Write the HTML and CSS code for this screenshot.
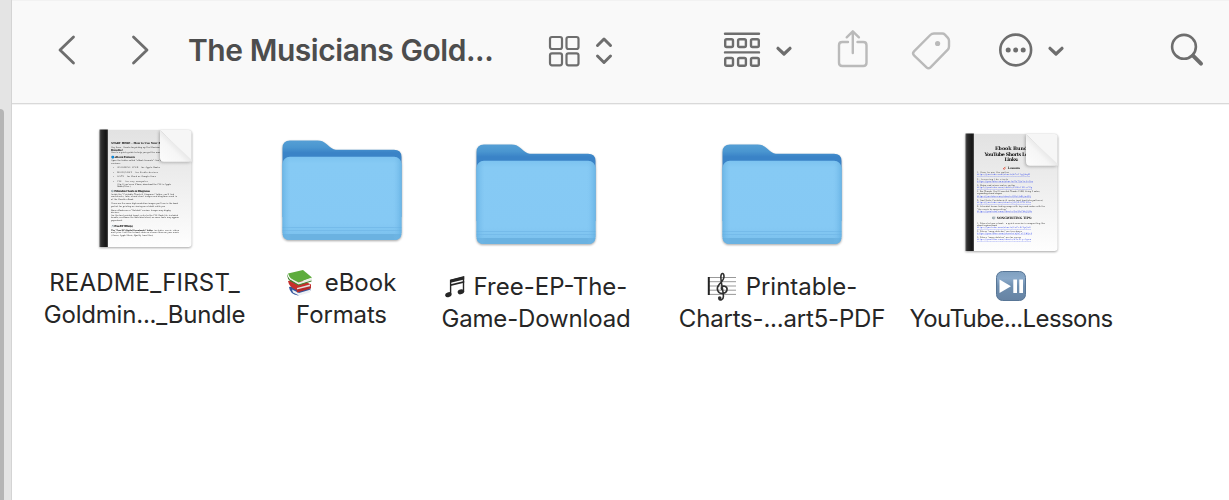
FILE: index.html
```html
<!DOCTYPE html>
<html lang="en">
<head>
    <meta charset="UTF-8">
    <meta name="viewport" content="width=device-width, initial-scale=1.0">
    <title>The Musicians Goldmine</title>
    <link rel="stylesheet" href="styles.css">
</head>
<body>
    <!-- shared gradients and the folder shape -->
    <svg class="defs" width="0" height="0">
        <defs>
            <linearGradient id="folderBack" x1="0" y1="0" x2="0" y2="1">
                <stop offset="0" stop-color="#559fd5"/>
                <stop offset="0.09" stop-color="#4a96d0"/>
                <stop offset="0.16" stop-color="#3a83c7"/>
                <stop offset="1" stop-color="#3a83c7"/>
            </linearGradient>
            <linearGradient id="folderFront" x1="0" y1="0" x2="0" y2="1">
                <stop offset="0" stop-color="#7cc3f0"/>
                <stop offset="0.08" stop-color="#86caf4"/>
                <stop offset="0.8" stop-color="#85c9f4"/>
                <stop offset="1" stop-color="#79bfec"/>
            </linearGradient>
            <linearGradient id="edge" x1="0" y1="0" x2="1" y2="0">
                <stop offset="0" stop-color="#5fade0" stop-opacity="0.7"/>
                <stop offset="0.07" stop-color="#7cc0ee" stop-opacity="0"/>
                <stop offset="0.93" stop-color="#7cc0ee" stop-opacity="0"/>
                <stop offset="1" stop-color="#5fade0" stop-opacity="0.7"/>
            </linearGradient>
            <linearGradient id="page" x1="0" y1="0" x2="0" y2="1">
                <stop offset="0" stop-color="#e2e2e2"/>
                <stop offset="0.45" stop-color="#eeeeee"/>
                <stop offset="1" stop-color="#fefefe"/>
            </linearGradient>
            <linearGradient id="binder" x1="0" y1="0" x2="1" y2="0">
                <stop offset="0" stop-color="#555"/>
                <stop offset="0.25" stop-color="#2c2c2c"/>
                <stop offset="0.8" stop-color="#141414"/>
                <stop offset="1" stop-color="#555"/>
            </linearGradient>
            <linearGradient id="curl" x1="0" y1="1" x2="0.55" y2="0.45">
                <stop offset="0" stop-color="#fcfcfc"/>
                <stop offset="0.7" stop-color="#f6f6f6"/>
                <stop offset="1" stop-color="#e6e6e6"/>
            </linearGradient>
            <linearGradient id="key" x1="0" y1="0" x2="0" y2="1">
                <stop offset="0" stop-color="#7fa0c0"/>
                <stop offset="0.25" stop-color="#8aa9c9"/>
                <stop offset="0.5" stop-color="#6f8fb0"/>
                <stop offset="1" stop-color="#6683a3"/>
            </linearGradient>
            <symbol id="folder" viewBox="0 0 130 128">
                <path d="M5.500 22q0-7.500 7.500-7.500h27.500c4 0 6 1 9 3.500l3.500 3c2.500 2 4.500 2.800 8.500 2.800h55.500q7.500 0 7.500 7.200v60h-119z" fill="url(#folderBack)"/>
                <rect x="5.500" y="30.800" width="119" height="83.200" rx="7.500" fill="url(#folderFront)"/>
                <path d="M5.700 101.500h118.600M5.700 104.500h118.600" stroke="#75bbea" stroke-width="1"/>
                <path d="M5.500 108h119q-.5 6-7.500 6h-104q-7 0-7.500-6z" fill="#6bb2e1"/>
                <rect x="5.500" y="30.800" width="119" height="83.200" rx="7.500" fill="url(#edge)"/>
            </symbol>
            <symbol id="sheet" viewBox="0 0 130 128">
                <path d="M20 4h88.500q3 0 3 3v111q0 3-3 3h-88.500z" fill="url(#page)"/>
                <rect x="19.500" y="3.500" width="8.500" height="117.500" fill="url(#binder)"/>
            </symbol>
            <symbol id="corner" viewBox="0 0 130 128">
                <path d="M80 4h28.500q3 0 3 3v29z" fill="#f6f6f6"/>
                <path d="M80 4.300v27.500q0 4 4 4h25q2.500 0 2.500-2z" fill="url(#curl)"/>
            </symbol>
        </defs>
    </svg>

    <div class="window">
        <div class="sidebar">
            <div class="scroll-thumb"></div>
        </div>

        <div class="main">
            <div class="toolbar">
                <svg class="icon back" width="20" height="40"><path d="M16.500 7L3 20l13.500 13"/></svg>
                <svg class="icon forward" width="20" height="40"><path d="M3.500 7L17 20 3.500 33"/></svg>
                <div class="title">The Musicians Gold...</div>
                <svg class="icon view" width="32" height="40">
                    <rect x="2" y="7" width="12" height="12" rx="2"/>
                    <rect x="18.500" y="7" width="12" height="12" rx="2"/>
                    <rect x="2" y="23.300" width="12" height="12" rx="2"/>
                    <rect x="18.500" y="23.300" width="12" height="12" rx="2"/>
                </svg>
                <svg class="icon updown" width="20" height="40"><path d="M3.500 15.500L10 9l6.500 6.500M3.500 26L10 32.500l6.500-6.500"/></svg>
                <svg class="icon group" width="38" height="40">
                    <path d="M2 3.700h34M2 22.400h34"/>
                    <rect x="2.200" y="9.200" width="7.800" height="7.800" rx="1.500"/>
                    <rect x="15.100" y="9.200" width="7.800" height="7.800" rx="1.500"/>
                    <rect x="28" y="9.200" width="7.800" height="7.800" rx="1.500"/>
                    <rect x="2.200" y="28" width="7.800" height="7.800" rx="1.500"/>
                    <rect x="15.100" y="28" width="7.800" height="7.800" rx="1.500"/>
                    <rect x="28" y="28" width="7.800" height="7.800" rx="1.500"/>
                </svg>
                <svg class="icon chevron" width="20" height="40"><path d="M4 18.300l6 5.700 6-5.700"/></svg>
                <svg class="icon share disabled" width="34" height="40">
                    <path d="M12 12H6.200Q3 12 3 15.200v17.600Q3 36 6.200 36h21.100q3.200 0 3.200-3.200V15.200q0-3.200-3.200-3.200H21.500M16.800 23V2M10.700 7.300l6.100-6 6.100 6"/>
                </svg>
                <svg class="icon tag disabled" width="40" height="40">
                    <path d="M22 3.500h8.300q1.500 0 2.600 1.100l3 3.300q1.100 1.200 1.100 2.800v5.800q0 1.800-1.200 3.100L18.500 37.300q-2 2-4 0L2 25.300q-1.900-1.900 0-3.900L18.300 5q1.500-1.500 3.700-1.500z"/>
                    <circle class="dot" cx="25.600" cy="13.500" r="2.600"/>
                </svg>
                <svg class="icon more" width="36" height="40">
                    <circle cx="17.700" cy="20" r="15.400"/>
                    <circle class="dot" cx="10.200" cy="20" r="2.500"/>
                    <circle class="dot" cx="17.700" cy="20" r="2.500"/>
                    <circle class="dot" cx="25.200" cy="20" r="2.500"/>
                </svg>
                <svg class="icon chevron more-chevron" width="20" height="40"><path d="M4 18.300l6 5.700 6-5.700"/></svg>
                <svg class="icon search" width="36" height="40">
                    <circle cx="15" cy="16.800" r="11.900"/>
                    <path class="handle" d="M24 25.700l8 8"/>
                </svg>
            </div>

            <div class="files">
                <div class="file">
                    <svg class="thumb" width="130" height="128">
                        <use href="#sheet"/>
                        <g class="doc-text">
                            <text class="b" x="31" y="17.700" textLength="58">START HERE – How to Use Your Bundle</text>
                            <text x="31" y="21.800" textLength="50">Hey there – thanks for picking up The Musicians</text>
                            <text class="b" x="31" y="24.600">Bundle!</text>
                            <text x="31" y="27.300" textLength="50">Here's a quick guide to help you get the most</text>
                            <text class="b" x="31" y="31.500" textLength="24">📘 eBook Formats</text>
                            <text x="31" y="34.700" textLength="55">Open the folder called "eBook Formats". You'll find</text>
                            <text x="31" y="37.500">versions:</text>
                            <text x="33" y="41.800">•</text><text x="37" y="41.800" textLength="43">GOLDMINE EPUB – for Apple Books</text>
                            <text x="33" y="46.500">•</text><text x="37" y="46.500" textLength="41">MOBI/AZW3 – for Kindle devices</text>
                            <text x="33" y="51.200">•</text><text x="37" y="51.200" textLength="39">DOCX – for Word or Google Docs</text>
                            <text x="33" y="56">•</text><text x="37" y="56" textLength="31">PDF – for any computer</text>
                            <text x="37" y="58.700" textLength="54">(Tip: If you're on iPhone, download the PDF in Apple</text>
                            <text x="37" y="61.200">Books/Files.)</text>
                            <text class="b" x="31" y="66" textLength="39">🎼 Printable Charts &amp; Diagrams</text>
                            <text x="31" y="68.700" textLength="63">Inside the "Printable Charts &amp; Diagrams" folder, you'll find</text>
                            <text x="31" y="71.400" textLength="66">worksheets, tabs, chord chart images and diagrams used in</text>
                            <text x="31" y="74" textLength="23">of the Bundle eBook.</text>
                            <text x="31" y="77.900" textLength="67">These are the same high-resolution images you'll see in the book</text>
                            <text x="31" y="80.600" textLength="54">perfect for printing or viewing on a tablet while you</text>
                            <text x="31" y="84.500" textLength="60">Some eBooks are a "Portable" version. Images may display</text>
                            <text x="31" y="87">devices.</text>
                            <text x="31" y="89.700" textLength="67">For the best printed layout, refer to the PDF Book file, included</text>
                            <text x="31" y="92.400" textLength="68">bundle, or choose the individual chart, as some fonts may appear</text>
                            <text x="31" y="95">paperback.</text>
                            <text class="b" x="31" y="101" textLength="22">🎵 Free EP Offer(s)</text>
                            <text class="m" x="31" y="104.500" textLength="42">The "Free EP (Digital Downloads)" folder</text>
                            <text x="74" y="104.500" textLength="25">includes music video</text>
                            <text x="31" y="107.200" textLength="68">and lyrics. Feel free to load, share or stream these on your music</text>
                            <text x="31" y="109.800" textLength="42">(iTunes, Apple Music, Spotify Local files)</text>
                        </g>
                        <use class="curl" href="#corner"/>
                    </svg>
                    <div class="label">
                        <div class="line readme">README_FIRST_</div>
                        <div class="line bundle">Goldmin..._Bundle</div>
                    </div>
                </div>

                <div class="file">
                    <svg class="thumb" width="130" height="128"><use href="#folder"/></svg>
                    <div class="label">
                        <div class="line">
                            <svg class="emoji books" width="26" height="28" viewBox="0 0 26 28">
                                <path d="M2 18l14-3 8 6-13 5.500q-8-1-9-8.500z" fill="#32569e"/>
                                <path d="M5 20.500l7 3.500 11-3.200v2.700L12 26.500l-6-3z" fill="#edf0f4"/>
                                <path d="M1 12l12-2 11 5.500v2L9 21Q2 18 1 12z" fill="#c62f2c"/>
                                <path d="M10 19l13-3.500v3.200L10 22z" fill="#e5e1df"/>
                                <path d="M9.500 20.500L24 17v2.500L10 23.500z" fill="#b5292a"/>
                                <path d="M1 4.500L16 1l9 7.500L11 13.500Q3 11 1 4.500z" fill="#5eac3d"/>
                                <path d="M3 9l8.500 4.500 13.500-4.500v2.500L12 16Q4 13 3 9z" fill="#e9eee5"/>
                                <path d="M1 4.500q-1 3 2 6l8.500 5 13-4v1L11.500 16.500 3 12Q-1 8 1 4.500z" fill="#3e7f2c"/>
                            </svg>
                            <span>eBook</span>
                        </div>
                        <div class="line formats">Formats</div>
                    </div>
                </div>

                <div class="file lower">
                    <svg class="thumb" width="130" height="128"><use href="#folder"/></svg>
                    <div class="label">
                        <div class="line free-ep">
                            <svg class="emoji notes" width="20" height="22" viewBox="0 0 20 22">
                                <path d="M5.600 18V4.400L18.500 1v15" fill="none" stroke="#262626" stroke-width="1.400"/>
                                <path d="M5.600 3.700L19.200.5v3L5.600 6.700zM5.600 8.200L19.200 5v1.800L5.600 10z" fill="#262626"/>
                                <ellipse cx="3.400" cy="18.700" rx="3.300" ry="2.400" transform="rotate(-18 3.400 18.700)" fill="#262626"/>
                                <ellipse cx="15.900" cy="15.800" rx="3.300" ry="2.400" transform="rotate(-18 15.900 15.800)" fill="#262626"/>
                            </svg>
                            <span>Free-EP-The-</span>
                        </div>
                        <div class="line game">Game-Download</div>
                    </div>
                </div>

                <div class="file lower">
                    <svg class="thumb" width="130" height="128"><use href="#folder"/></svg>
                    <div class="label">
                        <div class="line printable">
                            <svg class="emoji score" width="30" height="30" viewBox="0 0 30 30">
                                <path d="M1 5.500h28M1 9.700h28M1 14h28M1 18.200h28M1 22.400h28" stroke="#999" stroke-width="1"/>
                                <path d="M1.800 5v18" stroke="#222" stroke-width="2"/>
                                <path d="M14.800 17.500c-1.500-2 .8-4 3-3.200 3.500 1.200 3 6.700-2 7.200-5 .4-7-5-4-8.600 2.500-3 5.400-5 5.200-8.500C16.800.8 14.500.500 13.900 4c-.6 4 2.600 16 2.500 20.500 0 3.500-3.500 4.200-4.500 2.500" fill="none" stroke="#303030" stroke-width="1.600"/>
                                <circle cx="12.700" cy="26" r="1.800" fill="#303030"/>
                            </svg>
                            <span>Printable-</span>
                        </div>
                        <div class="line charts">Charts-...art5-PDF</div>
                    </div>
                </div>

                <div class="file lower">
                    <svg class="thumb" width="130" height="128">
                        <use href="#sheet"/>
                        <g class="doc-text">
                            <text class="h" x="49" y="19.700" textLength="37">Ebook Bundle</text>
                            <text class="h" x="38.500" y="25.500" textLength="54">YouTube Shorts Lesson</text>
                            <text class="h" x="58.500" y="30.700" textLength="14">Links:</text>
                            <text class="s" x="57" y="38.700" textLength="17"><tspan fill="#e05050">🎸</tspan> Lessons</text>
                            <text x="31" y="43" textLength="32">1. How to use the guitar</text>
                            <text class="a" x="31" y="45.300" textLength="53">https://youtube.com/shorts/b7uYTgJjkqM</text>
                            <text x="31" y="49.500" textLength="31">2. Learning the circle</text>
                            <text class="a" x="31" y="51.800" textLength="56">https://youtube.com/shorts/5s7QeYuExNw</text>
                            <text x="31" y="55.700" textLength="38">3. Major and minor scales, guitar</text>
                            <text class="a" x="31" y="58" textLength="55">https://youtube.com/shorts/l9WuTMLzZPg</text>
                            <text x="31" y="62" textLength="63">4. Bar Chords: The 5 Essential Chords TABS, Using 3 notes,</text>
                            <text x="31" y="64.400" textLength="25">expanding chord shapes</text>
                            <text class="a" x="31" y="66.800" textLength="54">https://youtube.com/shorts/ZSxEb8kjmWQ</text>
                            <text x="31" y="70.700" textLength="66">5. Tool Note: Pentatonic &amp; scales (and lead into patterns)</text>
                            <text class="a" x="31" y="73" textLength="54">https://youtube.com/shorts/jNQXAC9IVRw</text>
                            <text x="31" y="77" textLength="68">6. Extended lesson finding songs with keys and scales with the</text>
                            <text x="31" y="79.500" textLength="30">"the music to songwriting"</text>
                            <text class="a" x="31" y="81.800" textLength="55">https://youtube.com/shorts/4wMvPbkJQ8c</text>
                            <text class="s" x="46" y="88.700" textLength="40">🎼 SONGWRITING TIPS:</text>
                            <text x="31" y="93.500" textLength="68">1. Where to hear a hook – a quick exercise in songwriting like</text>
                            <text x="31" y="95.700" textLength="20">chord inspired hook</text>
                            <text class="a" x="31" y="98" textLength="54">https://youtube.com/shorts/EuPvKiXpQxU</text>
                            <text x="31" y="101.500" textLength="45">2. Where "song sketches" are for chorus</text>
                            <text class="a" x="31" y="103.800" textLength="55">https://youtube.com/shorts/uJb7xYFbQr0</text>
                            <text x="31" y="107.700" textLength="44">3. Where "song sketches" are for verses</text>
                            <text class="a" x="31" y="110" textLength="54">https://youtube.com/shorts/h2uXLyz1gno</text>
                        </g>
                        <use class="curl" href="#corner"/>
                    </svg>
                    <div class="label">
                        <div class="line">
                            <svg class="emoji play" width="30" height="30" viewBox="0 0 30 30">
                                <rect x=".5" y=".5" width="29" height="29" rx="6" fill="url(#key)" stroke="#587696"/>
                                <path d="M3.500 8.500L15 15.200 3.500 22z" fill="#fff"/>
                                <path d="M17.300 8.500h3.700v13.500h-3.700zM23.300 8.500H27v13.500h-3.700z" fill="#fff"/>
                            </svg>
                        </div>
                        <div class="line youtube">YouTube...Lessons</div>
                    </div>
                </div>
            </div>
        </div>
    </div>
</body>
</html>
```

FILE: styles.css
```css
body {
    margin: 0;
    background: #fff;
    color: #262626;
    font-family: Inter, "Liberation Sans", sans-serif;
    overflow: hidden;
}

.defs {
    display: block;
}

.window {
    display: flex;
    height: 500px;
}

.sidebar {
    width: 12px;
    box-sizing: border-box;
    flex-shrink: 0;
    padding-top: 109px;
    background: #e4e4e4;
    border-right: 1px solid #d4d4d4;
}

.scroll-thumb {
    width: 4px;
    height: 391px;
    background: #b5b5b5;
    border-top-right-radius: 4px;
}

.main {
    flex: 1;
}

.toolbar {
    height: 103px;
    box-sizing: border-box;
    padding: 0 24px 4px 45px;
    display: flex;
    align-items: center;
    background: #f9f9f9;
    border-top: 1px solid #f2f2f2;
    box-shadow: 0 1px 0 #d9d9d9, 0 2px 0 #f3f3f3;
}

.icon {
    flex-shrink: 0;
    fill: none;
    stroke: #6e6e6e;
    stroke-width: 2.4;
    stroke-linecap: round;
    stroke-linejoin: round;
    overflow: visible;
}

.icon .dot {
    fill: #6e6e6e;
    stroke: none;
}

.icon.disabled {
    stroke: #bababa;
}

.icon.disabled .dot {
    fill: #bababa;
}

.back,
.forward {
    stroke-width: 2.8;
}

.forward {
    margin-left: 53px;
}

.title {
    width: 310px;
    margin-left: 38px;
    font-size: 30px;
    font-weight: 600;
    letter-spacing: -0.45px;
    color: #4d4d4d;
    white-space: nowrap;
}

.view {
    margin-left: 49.5px;
    stroke-width: 2.2;
}

.updown {
    margin-left: 14.5px;
    stroke-width: 3;
}

.group {
    margin-left: 109px;
}

.chevron {
    margin-left: 13px;
    stroke-width: 3.2;
}

.share {
    margin-left: 42px;
}

.tag {
    margin-left: 42px;
}

.more {
    margin-left: 46px;
    stroke-width: 2.6;
}

.more-chevron {
    margin-left: 12px;
}

.search {
    margin-left: 103px;
    stroke-width: 2.6;
}

.search .handle {
    stroke-width: 4;
}

.files {
    display: grid;
    grid-template-columns: 213px 181px 208px 284px 174px;
    padding: 23px 0 0 26px;
}

.file {
    display: flex;
    flex-direction: column;
    align-items: center;
}

.file.lower {
    padding-top: 4px;
}

.thumb {
    filter: drop-shadow(0 1px 1px rgba(0, 0, 0, 0.35));
}

.curl {
    filter: drop-shadow(-1px 1px 1.5px rgba(0, 0, 0, 0.25));
}

.doc-text {
    font-family: "DejaVu Serif", "Liberation Serif", serif;
    font-size: 2.1px;
    fill: #222;
}

.doc-text .b {
    font-size: 2.7px;
    font-weight: bold;
    fill: #111;
}

.doc-text .m {
    font-weight: bold;
}

.doc-text .h {
    font-size: 4.8px;
    font-weight: bold;
    fill: #111;
}

.doc-text .s {
    font-size: 3px;
    font-weight: bold;
}

.doc-text .a {
    fill: #1a32ee;
    text-decoration: underline;
}

.label {
    margin-top: 13px;
    display: flex;
    flex-direction: column;
    align-items: center;
}

.line {
    height: 32px;
    display: flex;
    align-items: center;
    font-size: 24px;
    line-height: 32px;
    white-space: nowrap;
}

/* per-name tracking */
.readme {
    letter-spacing: 0.2px;
}

.bundle,
.charts {
    letter-spacing: -0.2px;
}

.formats,
.game {
    letter-spacing: -0.15px;
}

.youtube {
    letter-spacing: -0.6px;
}

.emoji {
    flex-shrink: 0;
}

.books {
    margin-right: 12px;
}

.notes {
    margin-right: 9px;
}

.score {
    margin-right: 9px;
}

.play {
    margin-top: -2px;
}
```
